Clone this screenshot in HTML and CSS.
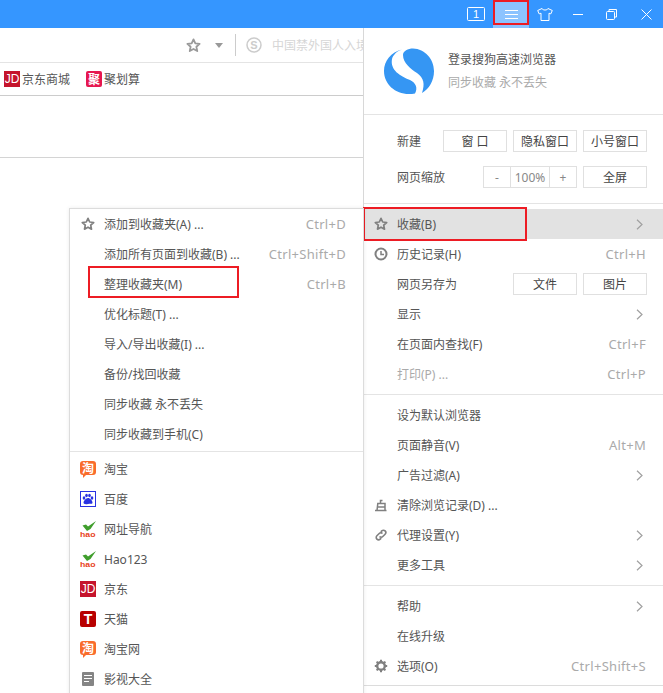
FILE: index.html
```html
<!DOCTYPE html>
<html>
<head>
    <title>搜狗高速浏览器</title>
    <meta charset="UTF-8">
    <link rel="stylesheet" href="styles.css">
</head>
<body>
    <svg class="defs" width="0" height="0">
        <symbol id="star" viewBox="0 0 14 14">
            <path d="M7 1.300l1.700 3.700 4 .5-3 2.700.8 4L7 10.200l-3.500 2 .8-4-3-2.700 4-.5z" fill="none" stroke="currentColor" stroke-width="1.700" stroke-linejoin="round"/>
        </symbol>
        <symbol id="chevron" viewBox="0 0 7 11">
            <path d="M1 .8L6 5.500 1 10.200" fill="none" stroke="#a0a0a0" stroke-width="1.200"/>
        </symbol>
    </svg>

    <div class="topbar">
        <svg class="win-icon tab-count" width="18" height="14" viewBox="0 0 18 14"><rect x=".5" y=".5" width="17" height="13" rx="1" fill="none" stroke="#fff"/><text x="9" y="11" class="tab-num">1</text></svg>
        <div class="menu-btn">
            <svg width="13" height="9" viewBox="0 0 13 9"><path d="M0 .5h13M0 4.500h13M0 8.500h13" stroke="#fff"/></svg>
        </div>
        <svg class="win-icon shirt" width="16" height="13" viewBox="0 0 16 13"><path d="M5 .5L.7 2.500l1.500 3.400 1.800-.7v7.300h8V5.200l1.800.7 1.500-3.400L11 .5C10.500 2.500 5.500 2.500 5 .5z" fill="none" stroke="#fff"/></svg>
        <svg class="win-icon minimize" width="10" height="1" viewBox="0 0 10 1"><path d="M0 .5h10" stroke="#fff"/></svg>
        <svg class="win-icon restore" width="11" height="11" viewBox="0 0 11 11"><path d="M3 2.500V.5h7.500v7.500H8.500" fill="none" stroke="#fff"/><rect x=".5" y="2.500" width="8" height="8" rx="1" fill="none" stroke="#fff"/></svg>
        <svg class="win-icon close" width="11" height="11" viewBox="0 0 11 11"><path d="M.5.5l10 10M10.500.5l-10 10" stroke="#fff"/></svg>
    </div>

    <div class="addrbar">
        <svg class="addr-star" width="15" height="15"><use href="#star"/></svg>
        <span class="caret"></span>
        <span class="addr-sep"></span>
        <svg class="engine" width="16" height="16" viewBox="0 0 16 16"><circle cx="8" cy="8" r="7" fill="none" stroke="#ccc" stroke-width="1.500"/><text x="8" y="12" class="engine-s">S</text></svg>
        <span class="addr-text">中国禁外国人入境</span>
    </div>

    <div class="bookmarks">
        <span class="bookmark"><span class="fav fav-jd">JD</span>京东商城</span>
        <span class="bookmark"><span class="fav fav-ju">聚</span>聚划算</span>
    </div>

    <div class="blank-strip"></div>

    <!-- 主菜单 -->
    <div class="main-menu">
        <div class="login">
            <svg width="50" height="46" viewBox="0 0 50 46">
                <path d="M19 7C19 3 24 .5 29 .5 41 1 50 11 50 23 50 33 45 41 38 45 41 36 40 30 33 25 27 21 19 15 19 7z" fill="#3596f3"/>
                <path d="M18 1.500C7 4 0 13 0 23 0 36 11 46 25 46 27 46 29 46 31 45.500 34 40 32 35 26 32 16 28 6 22 8 11 9 7 13 3 18 1.500z" fill="#3596f3"/>
            </svg>
            <div class="login-text">
                <div class="login-title">登录搜狗高速浏览器</div>
                <div class="login-sub">同步收藏 永不丢失</div>
            </div>
        </div>

        <div class="tools">
            <div class="tool-row">
                <span>新建</span>
                <div class="tool-btns">
                    <span class="btn">窗 口</span>
                    <span class="btn">隐私窗口</span>
                    <span class="btn">小号窗口</span>
                </div>
            </div>
            <div class="tool-row">
                <span>网页缩放</span>
                <div class="tool-btns">
                    <div class="zoom-group">
                        <span class="zoom-minus">-</span>
                        <span class="zoom-val">100%</span>
                        <span class="zoom-plus">+</span>
                    </div>
                    <span class="btn">全屏</span>
                </div>
            </div>
        </div>

        <div class="section">
            <div class="row row-hover">
                <svg class="row-icon" width="14" height="14"><use href="#star"/></svg>
                <span>收藏(B)</span>
                <svg class="chev" width="7" height="11"><use href="#chevron"/></svg>
                <span class="mark mark-fav"></span>
            </div>
            <div class="row">
                <svg class="row-icon" width="14" height="14" viewBox="0 0 14 14"><circle cx="7" cy="7" r="5.500" fill="none" stroke="currentColor" stroke-width="2"/><path d="M7 4v3.500h3" fill="none" stroke="currentColor" stroke-width="1.500"/></svg>
                <span>历史记录(H)</span><span class="key">Ctrl+H</span>
            </div>
            <div class="row">
                <span>网页另存为</span>
                <div class="tool-btns row-btns">
                    <span class="btn">文件</span>
                    <span class="btn">图片</span>
                </div>
            </div>
            <div class="row">
                <span>显示</span>
                <svg class="chev" width="7" height="11"><use href="#chevron"/></svg>
            </div>
            <div class="row">
                <span>在页面内查找(F)</span><span class="key">Ctrl+F</span>
            </div>
            <div class="row row-off">
                <span>打印(P) ...</span><span class="key">Ctrl+P</span>
            </div>
        </div>

        <div class="section">
            <div class="row"><span>设为默认浏览器</span></div>
            <div class="row"><span>页面静音(V)</span><span class="key">Alt+M</span></div>
            <div class="row">
                <span>广告过滤(A)</span>
                <svg class="chev" width="7" height="11"><use href="#chevron"/></svg>
            </div>
            <div class="row">
                <svg class="row-icon" width="14" height="14" viewBox="0 0 14 14"><path d="M1 12.500h11.500M3 12.500l.8-7h7.200v7M3.500 9h7.500M6.500 5.500V2.500h2" fill="none" stroke="currentColor" stroke-width="1.500"/></svg>
                <span>清除浏览记录(D) ...</span>
            </div>
            <div class="row">
                <svg class="row-icon" width="14" height="14" viewBox="0 0 14 14"><path d="M5.500 8.500a2.300 2.300 0 0 0 3.300 0l2.300-2.300A2.300 2.300 0 0 0 7.800 2.900L6.800 3.900M8.500 5.500a2.300 2.300 0 0 0-3.300 0L2.900 7.800a2.300 2.300 0 0 0 3.300 3.300l1-1" fill="none" stroke="currentColor" stroke-width="1.600"/></svg>
                <span>代理设置(Y)</span>
                <svg class="chev" width="7" height="11"><use href="#chevron"/></svg>
            </div>
            <div class="row">
                <span>更多工具</span>
                <svg class="chev" width="7" height="11"><use href="#chevron"/></svg>
            </div>
        </div>

        <div class="section section-last">
            <div class="row">
                <span>帮助</span>
                <svg class="chev" width="7" height="11"><use href="#chevron"/></svg>
            </div>
            <div class="row"><span>在线升级</span></div>
            <div class="row">
                <svg class="row-icon" width="14" height="14" viewBox="0 0 14 14"><circle cx="7" cy="7" r="3.800" fill="none" stroke="currentColor" stroke-width="2.400"/><path d="M7 .8v2.400M7 10.800v2.400M.8 7h2.400M10.800 7h2.400M2.600 2.600l1.700 1.700M9.700 9.700l1.700 1.700M2.600 11.400l1.700-1.700M9.700 4.300l1.700-1.700" stroke="currentColor" stroke-width="2"/></svg>
                <span>选项(O)</span><span class="key">Ctrl+Shift+S</span>
            </div>
        </div>
    </div>

    <!-- 收藏子菜单 -->
    <div class="sub-menu">
        <div class="row">
            <svg class="row-icon" width="14" height="14"><use href="#star"/></svg>
            <span>添加到收藏夹(A) ...</span><span class="key">Ctrl+D</span>
        </div>
        <div class="row"><span>添加所有页面到收藏(B) ...</span><span class="key">Ctrl+Shift+D</span></div>
        <div class="row">
            <span>整理收藏夹(M)</span><span class="key">Ctrl+B</span>
            <span class="mark mark-manage"></span>
        </div>
        <div class="row"><span>优化标题(T) ...</span></div>
        <div class="row"><span>导入/导出收藏(I) ...</span></div>
        <div class="row"><span>备份/找回收藏</span></div>
        <div class="row"><span>同步收藏 永不丢失</span></div>
        <div class="row"><span>同步收藏到手机(C)</span></div>

        <div class="sub-list">
            <div class="row"><span class="fav-slot fav fav-tb">淘</span><span>淘宝</span></div>
            <div class="row">
                <svg class="fav-slot" width="16" height="16" viewBox="0 0 16 16"><rect x=".5" y=".5" width="15" height="15" fill="#fff" stroke="#2932e1"/><g fill="#2932e1"><ellipse cx="4" cy="7" rx="1.300" ry="1.700"/><ellipse cx="6.500" cy="4.500" rx="1.300" ry="1.700"/><ellipse cx="9.500" cy="4.500" rx="1.300" ry="1.700"/><ellipse cx="12" cy="7" rx="1.300" ry="1.700"/><path d="M8 7c-2 0-4.500 3-4.500 4.500S5 13.500 8 13s4.500 .5 4.500-1.500S10 7 8 7z"/></g></svg>
                <span>百度</span>
            </div>
            <div class="row">
                <svg class="fav-slot" width="16" height="16" viewBox="0 0 16 16"><path d="M2.500 4.500L6 3.500 8 5.500 16 0 10.500 8 7 10z" fill="#3f9e2c"/><text x="0" y="15.500" textLength="15.500" lengthAdjust="spacingAndGlyphs" class="hao-text">hao</text></svg>
                <span>网址导航</span>
            </div>
            <div class="row">
                <svg class="fav-slot" width="16" height="16" viewBox="0 0 16 16"><path d="M2.500 4.500L6 3.500 8 5.500 16 0 10.500 8 7 10z" fill="#3f9e2c"/><text x="0" y="15.500" textLength="15.500" lengthAdjust="spacingAndGlyphs" class="hao-text">hao</text></svg>
                <span>Hao123</span>
            </div>
            <div class="row"><span class="fav-slot fav fav-jd">JD</span><span>京东</span></div>
            <div class="row"><span class="fav-slot fav fav-tm">T</span><span>天猫</span></div>
            <div class="row"><span class="fav-slot fav fav-tb">淘</span><span>淘宝网</span></div>
            <div class="row">
                <svg class="fav-slot" width="16" height="16" viewBox="0 0 16 16"><rect x="2" y="1" width="12" height="14" rx="1" fill="#858585"/><path d="M4 4.500h8M4 7.500h8M4 10.500h5" stroke="#fff"/></svg>
                <span>影视大全</span>
            </div>
        </div>
    </div>
</body>
</html>
```

FILE: styles.css
```css
body {
    margin: 0;
    padding: 0;
    height: 693px;
    overflow: hidden;
    position: relative;
    background: #fff;
    color: #555;
    font-family: "Noto Sans", "Noto Sans CJK SC", sans-serif;
    font-size: 12px;
}

.defs {
    position: absolute;
}

.hao-text {
    font-family: "Liberation Sans", sans-serif;
    font-size: 8px;
    font-weight: bold;
    fill: #e8441c;
}

/* 顶部蓝条 */
.topbar {
    height: 28px;
    background: #3596ff;
    display: flex;
    align-items: flex-start;
    color: #fff;
}

.win-icon {
    flex: none;
}

.tab-count {
    margin: 7px 0 0 467px;
}

.tab-num {
    font-family: "Liberation Sans", sans-serif;
    font-size: 11px;
    text-anchor: middle;
    fill: #fff;
}

.menu-btn {
    width: 36px;
    height: 28px;
    margin-left: 8px;
    background: #8cc3ff;
    position: relative;
    display: flex;
    justify-content: center;
    align-items: flex-start;
    padding-top: 10px;
    box-sizing: border-box;
}

.menu-btn::after {
    content: "";
    position: absolute;
    left: 0;
    top: 0;
    width: 36px;
    height: 25px;
    box-sizing: border-box;
    border: 2px solid #ed1c24;
}

.shirt { margin: 8px 0 0 8px; }
.minimize { margin: 14px 0 0 20px; }
.restore { margin: 9px 0 0 23px; }
.close { margin: 9px 0 0 24px; }

/* 地址栏 */
.addrbar {
    height: 35px;
    box-sizing: border-box;
    border-bottom: 1px solid #e4e4e4;
    display: flex;
    align-items: center;
    padding-left: 186px;
}

.addr-star {
    color: #9a9a9a;
}

.caret {
    margin-left: 14px;
    border: 4px solid transparent;
    border-top: 5px solid #999;
    border-bottom: 0;
}

.addr-sep {
    width: 1px;
    height: 22px;
    margin-left: 12px;
    background: #ccc;
}

.engine {
    margin-left: 10px;
}

.engine-s {
    font-family: "Liberation Sans", sans-serif;
    font-size: 11px;
    font-weight: bold;
    text-anchor: middle;
    fill: #ccc;
}

.addr-text {
    margin-left: 10px;
    color: #d6d6d6;
    white-space: nowrap;
}

/* 收藏栏 */
.bookmarks {
    height: 33px;
    box-sizing: border-box;
    border-bottom: 1px solid #ccc;
    display: flex;
    align-items: center;
    gap: 16px;
    padding-left: 4px;
}

.bookmark {
    display: flex;
    align-items: center;
    gap: 2px;
}

.fav {
    width: 16px;
    height: 16px;
    flex: none;
    display: flex;
    align-items: center;
    justify-content: center;
    color: #fff;
}

.fav-jd {
    background: #c5142c;
    font-family: "Liberation Sans", sans-serif;
    font-size: 12px;
}

.fav-ju {
    background: #e6174f;
    border-radius: 2px;
    font-weight: bold;
}

.fav-tb {
    height: 14px;
    background: #f96c2c;
    border-radius: 3px;
    font-weight: bold;
    font-size: 12px;
    position: relative;
}

.fav-tb::after {
    content: "";
    position: absolute;
    left: 3px;
    top: 14px;
    border-top: 3px solid #f96c2c;
    border-right: 3px solid transparent;
}

.fav-tm {
    background: #b80000;
    border-radius: 2px;
    font-family: "Liberation Sans", sans-serif;
    font-size: 14px;
    font-weight: bold;
}

.blank-strip {
    height: 61px;
    border-bottom: 1px solid #d4d4d4;
}

/* 菜单公共部分 */
.row {
    height: 30px;
    display: flex;
    align-items: center;
    position: relative;
    padding: 0 17px 0 34px;
    white-space: nowrap;
}

.row-icon {
    position: absolute;
    left: 11px;
    top: 8px;
    color: #808080;
}

.fav-slot {
    position: absolute;
    left: 10px;
    top: 7px;
}

.key {
    margin-left: auto;
    color: #aaa;
    font-size: 13px;
    letter-spacing: 0.3px;
}

.chev {
    margin: 0 3px 0 auto;
}

.mark {
    position: absolute;
    box-sizing: border-box;
    border: 2px solid #ed1c24;
}

.mark-fav {
    left: -1px;
    top: -2px;
    width: 164px;
    height: 34px;
}

.mark-manage {
    left: 18px;
    top: -3px;
    width: 151px;
    height: 32px;
}

/* 右侧主菜单 */
.main-menu {
    position: absolute;
    left: 363px;
    top: 28px;
    width: 300px;
    height: 658px;
    box-sizing: border-box;
    background: #fff;
    border-left: 1px solid #d8d8d8;
    border-bottom: 1px solid #dcdcdc;
}

.main-menu .row {
    padding-left: 33px;
}

.main-menu .row-icon {
    left: 10px;
}

.login {
    height: 86px;
    box-sizing: border-box;
    display: flex;
    align-items: center;
    gap: 14px;
    padding: 0 0 1px 20px;
}

.login-text {
    display: flex;
    flex-direction: column;
    gap: 5px;
    margin-top: -1px;
}

.login-title {
    color: #555;
}

.login-sub {
    color: #aaa;
}

.tools {
    border-top: 1px solid #e4e4e4;
    padding: 15px 16px 15px 33px;
    display: flex;
    flex-direction: column;
    gap: 14px;
}

.tool-row {
    height: 22px;
    display: flex;
    align-items: center;
}

.tool-btns {
    margin-left: auto;
    display: flex;
    gap: 6px;
}

.row-btns {
    margin-right: -1px;
}

.btn {
    width: 64px;
    height: 22px;
    box-sizing: border-box;
    border: 1px solid #e0e0e0;
    display: flex;
    align-items: center;
    justify-content: center;
    color: #444;
}

.zoom-group {
    width: 94px;
    height: 22px;
    box-sizing: border-box;
    border: 1px solid #e0e0e0;
    display: flex;
    color: #888;
}

.zoom-group span {
    display: flex;
    align-items: center;
    justify-content: center;
}

.zoom-minus { width: 26px; }
.zoom-val {
    width: 40px;
    box-sizing: border-box;
    border-left: 1px solid #e0e0e0;
    border-right: 1px solid #e0e0e0;
}
.zoom-plus { width: 26px; }

.section {
    border-top: 1px solid #e4e4e4;
    padding: 5px 0;
}

.section-last {
    padding-bottom: 4px;
}

.row-hover {
    background: #e2e2e2;
}

.row-off span:first-child {
    color: #aaa;
}

/* 左侧收藏子菜单 */
.sub-menu {
    position: absolute;
    left: 69px;
    top: 208px;
    width: 295px;
    height: 490px;
    box-sizing: border-box;
    background: #fff;
    border: 1px solid #dcdcdc;
    box-shadow: 0 0 4px rgba(0, 0, 0, 0.08);
}

.sub-list {
    margin-top: 2px;
    border-top: 1px solid #e4e4e4;
    padding-top: 2px;
}
```
